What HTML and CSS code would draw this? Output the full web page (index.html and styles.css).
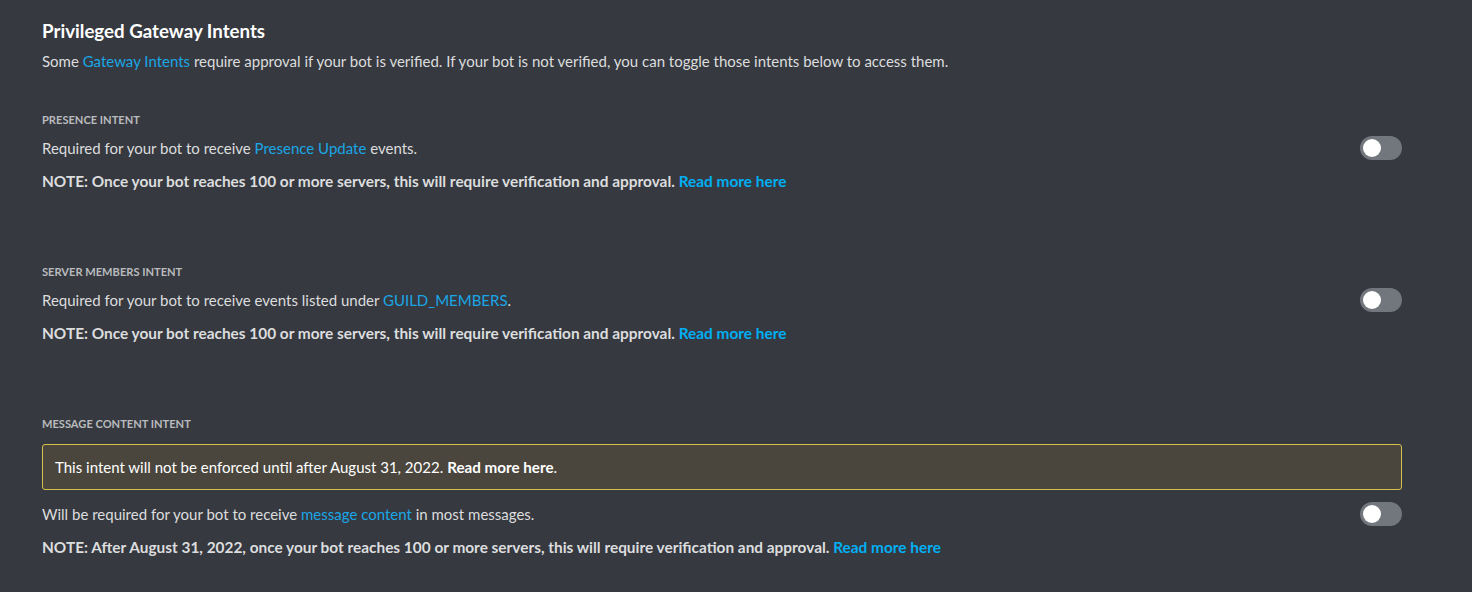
FILE: index.html
```html
<!DOCTYPE html>
<html lang="en">
<head>
<meta charset="utf-8">
<title>Privileged Gateway Intents</title>
<link rel="stylesheet" href="styles.css">
</head>
<body>
<main class="page">
  <h2 class="title">Privileged Gateway Intents</h2>
  <p class="lead">Some <a class="link" href="#">Gateway Intents</a> require approval if your bot is verified. If your bot is not verified, you can toggle those intents below to access them.</p>

  <section class="intent">
    <h3 class="label">PRESENCE INTENT</h3>
    <div class="row">
      <p class="desc">Required for your bot to receive <a class="link" href="#">Presence Update</a> events.</p>
      <span class="toggle"><span class="knob"></span></span>
    </div>
    <p class="note">NOTE: Once your bot reaches 100 or more servers, this will require verification and approval. <a class="link-bold" href="#">Read more here</a></p>
  </section>

  <section class="intent">
    <h3 class="label">SERVER MEMBERS INTENT</h3>
    <div class="row">
      <p class="desc">Required for your bot to receive events listed under <a class="link" href="#">GUILD_MEMBERS</a>.</p>
      <span class="toggle"><span class="knob"></span></span>
    </div>
    <p class="note">NOTE: Once your bot reaches 100 or more servers, this will require verification and approval. <a class="link-bold" href="#">Read more here</a></p>
  </section>

  <section class="intent">
    <h3 class="label">MESSAGE CONTENT INTENT</h3>
    <div class="warning">This intent will not be enforced until after August 31, 2022. <a class="warning-link" href="#">Read more here</a>.</div>
    <div class="row">
      <p class="desc">Will be required for your bot to receive <a class="link" href="#">message content</a> in most messages.</p>
      <span class="toggle"><span class="knob"></span></span>
    </div>
    <p class="note">NOTE: After August 31, 2022, once your bot reaches 100 or more servers, this will require verification and approval. <a class="link-bold" href="#">Read more here</a></p>
  </section>
</main>
</body>
</html>
```
FILE: styles.css
```css
html, body {
  margin: 0;
  padding: 0;
  background: #36393f;
}
body {
  font-family: Lato, "Liberation Sans", sans-serif;
  color: #dcddde;
}
.page {
  padding: 19px 70px 0 42px;
}
.title {
  margin: 0;
  font-size: 18.7px;
  line-height: 24px;
  font-weight: 700;
  color: #ffffff;
}
.lead {
  margin: 8px 0 0;
  font-size: 15px;
  line-height: 20px;
  color: #dcddde;
}
.link {
  color: #1aa6e6;
  text-decoration: none;
}
.link-bold {
  color: #00aff4;
  font-weight: 700;
  text-decoration: none;
}
.intent {
  margin-top: 40px;
}
.intent + .intent {
  margin-top: 72px;
}
.label {
  margin: 0;
  font-size: 11.1px;
  line-height: 16px;
  font-weight: 700;
  color: #b9bbbe;
  padding-top: 1px;
}
.row {
  display: flex;
  align-items: center;
  justify-content: space-between;
  margin-top: 8px;
  height: 24px;
}
.desc {
  margin: 0;
  font-size: 15px;
  line-height: 20px;
  color: #dcddde;
}
.toggle {
  position: relative;
  width: 42px;
  height: 24px;
  border-radius: 12px;
  background: #72767d;
  flex: none;
}
.knob {
  position: absolute;
  left: 3px;
  top: 3px;
  width: 18px;
  height: 18px;
  border-radius: 50%;
  background: #ffffff;
}
.note {
  margin: 11px 0 0;
  font-size: 15.4px;
  line-height: 20px;
  font-weight: 700;
  color: #dcddde;
}
.warning {
  margin-top: 12px;
  box-sizing: border-box;
  height: 46px;
  padding: 0 12px;
  display: flex;
  align-items: center;
  border: 1px solid #d4c24e;
  border-radius: 3px;
  background: #4a463d;
  font-size: 15px;
  color: #ffffff;
}
.warning + .row {
  margin-top: 12px;
}
.warning-link {
  color: #ffffff;
  font-weight: 700;
  font-size: 15.2px;
  text-decoration: none;
  margin-left: 4px;
}
```
